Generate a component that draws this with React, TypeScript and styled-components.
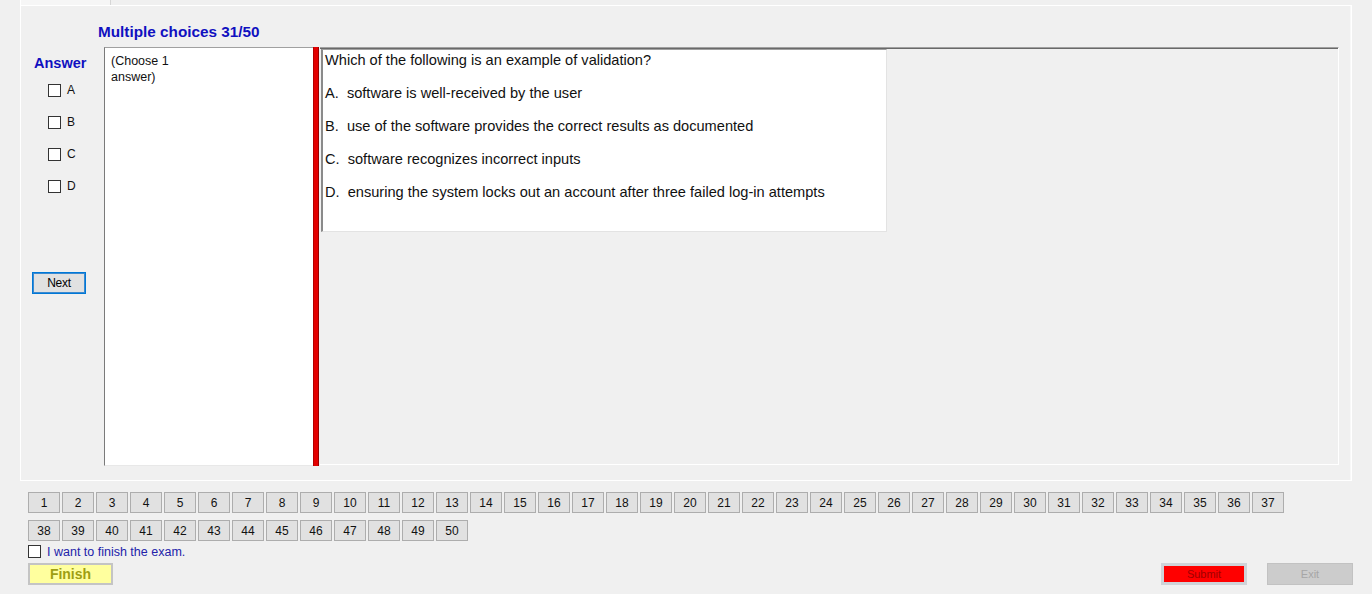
import React from 'react';
import styled, { createGlobalStyle } from 'styled-components';

const Global = createGlobalStyle`
  html, body { margin: 0; padding: 0; background: #f0f0f0; }
  body { font-family: "Liberation Sans", Arial, sans-serif; color: #000; }
  * { box-sizing: border-box; }
`;

const Window = styled.div`
  width: 1372px;
  height: 594px;
  background: #f0f0f0;
  overflow: hidden;
  display: flex;
  flex-direction: column;
`;

const TabStrip = styled.div`
  height: 5px;
  padding-left: 20px;
  display: flex;
`;

const Tab = styled.div`
  width: 91px;
  height: 5px;
  background: #f6f6f6;
  border-left: 1px solid #ffffff;
  border-right: 1px solid #d6d6d6;
`;

const TabPage = styled.div`
  margin-left: 20px;
  width: 1332px;
  height: 476px;
  border: 1px solid #ffffff;
  box-shadow: inset -1px 0 0 #f8f8f8;
  padding: 0 12px 0 13px;
  display: flex;
  flex-direction: column;
`;

const Header = styled.div`
  height: 41px;
  padding: 17px 0 0 64px;
`;

const Title = styled.div`
  font-size: 15.3px;
  line-height: 18px;
  font-weight: bold;
  color: #1010c0;
`;

const Body = styled.div`
  height: 419px;
  display: flex;
  align-items: flex-start;
`;

const LeftCol = styled.div`
  width: 70px;
  display: flex;
  flex-direction: column;
`;

const AnswerLabel = styled.div`
  margin-top: 8px;
  font-size: 14.5px;
  line-height: 17px;
  font-weight: bold;
  color: #1010c0;
`;

const ChoiceList = styled.div`
  margin-top: 2px;
  padding-left: 14px;
  display: flex;
  flex-direction: column;
`;

const ChoiceRow = styled.div`
  height: 32px;
  display: flex;
  align-items: center;
  gap: 6px;
  font-size: 12px;
  color: #111;
`;

const Box = styled.span`
  width: 13px;
  height: 13px;
  background: #ffffff;
  border: 1px solid #333333;
  flex: none;
`;

const NextButton = styled.button`
  margin: 70px 0 0 -2px;
  width: 54px;
  height: 22px;
  padding: 0;
  background: #e1e1e1;
  border: 1px solid #0078d7;
  box-shadow: inset 0 0 0 1px #3c8ad0;
  font-family: "Liberation Sans", Arial, sans-serif;
  font-size: 12px;
  color: #000;
  letter-spacing: -0.3px;
`;

const ChoiceBox = styled.div`
  width: 209px;
  height: 419px;
  background: #ffffff;
  border-left: 1px solid #7a7a7a;
  border-top: 1px solid #a0a0a0;
  border-bottom: 1px solid #e8e8e8;
  padding: 5px 0 0 6px;
  font-size: 12.5px;
  line-height: 16px;
  color: #111;
`;

const RedBar = styled.div`
  width: 6px;
  height: 419px;
  background: #e30000;
  box-shadow: inset 1px 0 0 #b40000, inset -1px 0 0 #9a0000;
`;

const QuestionPanel = styled.div`
  flex: 1;
  margin-left: 1px;
  height: 418px;
  border-top: 1px solid #a0a0a0;
  box-shadow: inset 0 1px 0 #696969;
  border-right: 1px solid #ffffff;
  border-bottom: 1px solid #ffffff;
  padding: 1px 0 0 1px;
`;

const QuestionBox = styled.div`
  width: 566px;
  height: 183px;
  background: #ffffff;
  border-left: 2px solid #8a8a8a;
  border-top: 1px solid #a0a0a0;
  border-right: 1px solid #e3e3e3;
  border-bottom: 1px solid #e3e3e3;
  padding: 2px 0 0 2px;
  display: flex;
  flex-direction: column;
  gap: 16px;
`;

const QLine = styled.div`
  font-size: 14.6px;
  line-height: 17px;
  color: #111;
  white-space: pre;
`;

const Bottom = styled.div`
  padding: 11px 19px 0 28px;
  display: flex;
  flex-direction: column;
`;

const NumberGrid = styled.div`
  display: grid;
  grid-template-columns: repeat(37, 32px);
  grid-auto-rows: 21px;
  column-gap: 2px;
  row-gap: 7px;
`;

const NumButton = styled.button`
  padding: 0;
  background: #e1e1e1;
  border: 1px solid #adadad;
  font-family: "Liberation Sans", Arial, sans-serif;
  font-size: 12px;
  color: #111;
`;

const FinishCheck = styled.div`
  margin-top: 4px;
  height: 13px;
  display: flex;
  align-items: center;
  gap: 6px;
  font-size: 12.5px;
  color: #2222aa;
`;

const ActionRow = styled.div`
  margin-top: 5px;
  display: flex;
  align-items: flex-start;
`;

const FinishButton = styled.button`
  width: 85px;
  height: 22px;
  padding: 0;
  background: #ffff9e;
  border: 2px solid #c4c4c4;
  font-family: "Liberation Sans", Arial, sans-serif;
  font-size: 14px;
  font-weight: bold;
  color: #9e9e12;
`;

const Spacer = styled.div`
  flex: 1;
`;

const SubmitButton = styled.button`
  width: 86px;
  height: 22px;
  padding: 0;
  margin-right: 20px;
  background: #ff0000;
  border: 3px solid #cfd3d8;
  font-family: "Liberation Sans", Arial, sans-serif;
  font-size: 11px;
  color: #a00000;
`;

const ExitButton = styled.button`
  width: 86px;
  height: 22px;
  padding: 0;
  background: #cccccc;
  border: 1px solid #c2c2c2;
  font-family: "Liberation Sans", Arial, sans-serif;
  font-size: 11px;
  color: #a6a6a6;
`;

const question = 'Which of the following is an example of validation?';
const options = [
  'A.  software is well-received by the user',
  'B.  use of the software provides the correct results as documented',
  'C.  software recognizes incorrect inputs',
  'D.  ensuring the system locks out an account after three failed log-in attempts',
];

export default function App() {
  const numbers = Array.from({ length: 50 }, (_, i) => i + 1);
  return (
    <Window>
      <Global />
      <TabStrip>
        <Tab />
      </TabStrip>
      <TabPage>
        <Header>
          <Title>Multiple choices 31/50</Title>
        </Header>
        <Body>
          <LeftCol>
            <AnswerLabel>Answer</AnswerLabel>
            <ChoiceList>
              {['A', 'B', 'C', 'D'].map((l) => (
                <ChoiceRow key={l}>
                  <Box />
                  <span>{l}</span>
                </ChoiceRow>
              ))}
            </ChoiceList>
            <NextButton>Next</NextButton>
          </LeftCol>
          <ChoiceBox>
            (Choose 1
            <br />
            answer)
          </ChoiceBox>
          <RedBar />
          <QuestionPanel>
            <QuestionBox>
              <QLine>{question}</QLine>
              {options.map((o) => (
                <QLine key={o}>{o}</QLine>
              ))}
            </QuestionBox>
          </QuestionPanel>
        </Body>
      </TabPage>
      <Bottom>
        <NumberGrid>
          {numbers.map((n) => (
            <NumButton key={n}>{n}</NumButton>
          ))}
        </NumberGrid>
        <FinishCheck>
          <Box />
          <span>I want to finish the exam.</span>
        </FinishCheck>
        <ActionRow>
          <FinishButton>Finish</FinishButton>
          <Spacer />
          <SubmitButton>Submit</SubmitButton>
          <ExitButton>Exit</ExitButton>
        </ActionRow>
      </Bottom>
    </Window>
  );
}
